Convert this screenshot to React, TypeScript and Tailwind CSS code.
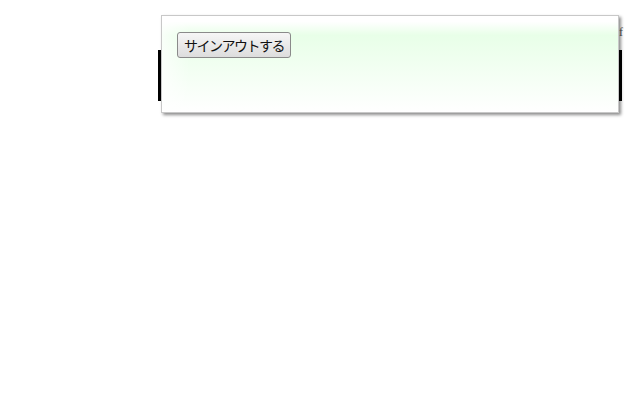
export default function App() {
  return (
    <div className="relative h-[400px] w-[640px] bg-white font-['Noto_Sans_CJK_JP','Liberation_Sans',sans-serif]">
      {/* black bar behind the popup */}
      <div className="absolute left-[158px] top-[50px] h-[51px] w-[464px] bg-black" />
      <span className="absolute left-[619px] top-[26px] font-['Liberation_Serif',serif] text-[12px] leading-none text-[#555]">f</span>
      {/* popup */}
      <div className="absolute left-[161px] top-[15px] h-[98px] w-[458px] border border-[#c8c8c8] bg-white shadow-[2px_2px_3px_rgba(0,0,0,0.45)]">
        <div className="h-full w-full bg-gradient-to-b from-white from-[6%] via-[#e8ffe8] via-[20%] to-white">
          <div className="h-full w-full bg-gradient-to-r from-white/70 via-transparent via-[6%] to-transparent px-[15px] pt-[16px]">
            <button className="flex h-[26px] w-[114px] items-center justify-center rounded-[3px] border border-[#8a8a8a] bg-gradient-to-b from-[#f6f6f6] to-[#dddddd] text-[14px] leading-none tracking-[-1.5px] text-[#111]">
              サインアウトする
            </button>
          </div>
        </div>
      </div>
    </div>
  );
}
